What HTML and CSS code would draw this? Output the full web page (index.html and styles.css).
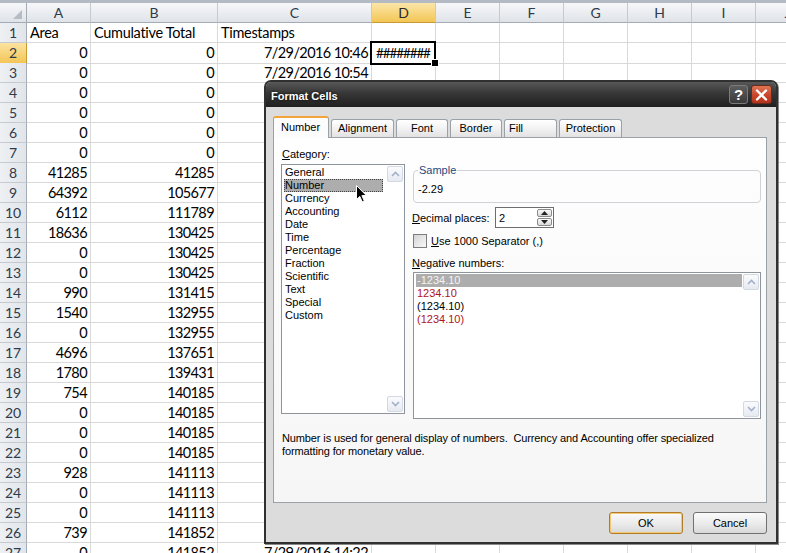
FILE: index.html
```html
<!DOCTYPE html>
<html>
<head>
<meta charset="utf-8">
<title>Format Cells</title>
<link rel="stylesheet" href="styles.css">
</head>
<body>
<div class="sheet">
  <div class="row head">
    <div class="corner"><span class="tri"></span></div>
    <div>A</div><div>B</div><div>C</div><div class="selcol">D</div><div>E</div><div>F</div><div>G</div><div>H</div><div>I</div><div>J</div>
  </div>
  <div class="row"><div class="rh">1</div><div class="t">Area</div><div class="t">Cumulative Total</div><div class="t">Timestamps</div><div></div><div></div><div></div><div></div><div></div><div></div><div></div></div>
  <div class="row"><div class="rh selrow">2</div><div class="n">0</div><div class="n">0</div><div class="n">7/29/2016 10:46</div><div class="curcell">########<span class="handle"></span></div><div></div><div></div><div></div><div></div><div></div><div></div></div>
  <div class="row"><div class="rh">3</div><div class="n">0</div><div class="n">0</div><div class="n">7/29/2016 10:54</div><div></div><div></div><div></div><div></div><div></div><div></div><div></div></div>
  <div class="row"><div class="rh">4</div><div class="n">0</div><div class="n">0</div><div></div><div></div><div></div><div></div><div></div><div></div><div></div><div></div></div>
  <div class="row"><div class="rh">5</div><div class="n">0</div><div class="n">0</div><div></div><div></div><div></div><div></div><div></div><div></div><div></div><div></div></div>
  <div class="row"><div class="rh">6</div><div class="n">0</div><div class="n">0</div><div></div><div></div><div></div><div></div><div></div><div></div><div></div><div></div></div>
  <div class="row"><div class="rh">7</div><div class="n">0</div><div class="n">0</div><div></div><div></div><div></div><div></div><div></div><div></div><div></div><div></div></div>
  <div class="row"><div class="rh">8</div><div class="n">41285</div><div class="n">41285</div><div></div><div></div><div></div><div></div><div></div><div></div><div></div><div></div></div>
  <div class="row"><div class="rh">9</div><div class="n">64392</div><div class="n">105677</div><div></div><div></div><div></div><div></div><div></div><div></div><div></div><div></div></div>
  <div class="row"><div class="rh">10</div><div class="n">6112</div><div class="n">111789</div><div></div><div></div><div></div><div></div><div></div><div></div><div></div><div></div></div>
  <div class="row"><div class="rh">11</div><div class="n">18636</div><div class="n">130425</div><div></div><div></div><div></div><div></div><div></div><div></div><div></div><div></div></div>
  <div class="row"><div class="rh">12</div><div class="n">0</div><div class="n">130425</div><div></div><div></div><div></div><div></div><div></div><div></div><div></div><div></div></div>
  <div class="row"><div class="rh">13</div><div class="n">0</div><div class="n">130425</div><div></div><div></div><div></div><div></div><div></div><div></div><div></div><div></div></div>
  <div class="row"><div class="rh">14</div><div class="n">990</div><div class="n">131415</div><div></div><div></div><div></div><div></div><div></div><div></div><div></div><div></div></div>
  <div class="row"><div class="rh">15</div><div class="n">1540</div><div class="n">132955</div><div></div><div></div><div></div><div></div><div></div><div></div><div></div><div></div></div>
  <div class="row"><div class="rh">16</div><div class="n">0</div><div class="n">132955</div><div></div><div></div><div></div><div></div><div></div><div></div><div></div><div></div></div>
  <div class="row"><div class="rh">17</div><div class="n">4696</div><div class="n">137651</div><div></div><div></div><div></div><div></div><div></div><div></div><div></div><div></div></div>
  <div class="row"><div class="rh">18</div><div class="n">1780</div><div class="n">139431</div><div></div><div></div><div></div><div></div><div></div><div></div><div></div><div></div></div>
  <div class="row"><div class="rh">19</div><div class="n">754</div><div class="n">140185</div><div></div><div></div><div></div><div></div><div></div><div></div><div></div><div></div></div>
  <div class="row"><div class="rh">20</div><div class="n">0</div><div class="n">140185</div><div></div><div></div><div></div><div></div><div></div><div></div><div></div><div></div></div>
  <div class="row"><div class="rh">21</div><div class="n">0</div><div class="n">140185</div><div></div><div></div><div></div><div></div><div></div><div></div><div></div><div></div></div>
  <div class="row"><div class="rh">22</div><div class="n">0</div><div class="n">140185</div><div></div><div></div><div></div><div></div><div></div><div></div><div></div><div></div></div>
  <div class="row"><div class="rh">23</div><div class="n">928</div><div class="n">141113</div><div></div><div></div><div></div><div></div><div></div><div></div><div></div><div></div></div>
  <div class="row"><div class="rh">24</div><div class="n">0</div><div class="n">141113</div><div></div><div></div><div></div><div></div><div></div><div></div><div></div><div></div></div>
  <div class="row"><div class="rh">25</div><div class="n">0</div><div class="n">141113</div><div></div><div></div><div></div><div></div><div></div><div></div><div></div><div></div></div>
  <div class="row"><div class="rh">26</div><div class="n">739</div><div class="n">141852</div><div></div><div></div><div></div><div></div><div></div><div></div><div></div><div></div></div>
  <div class="row"><div class="rh">27</div><div class="n">0</div><div class="n">141852</div><div class="n">7/29/2016 14:22</div><div></div><div></div><div></div><div></div><div></div><div></div><div></div></div>
</div>

<div class="dialog">
  <div class="titlebar">
    <span class="title">Format Cells</span>
    <span class="tb-btns">
      <span class="help">?</span>
      <span class="close"><svg width="13" height="12" viewBox="0 0 13 12"><path d="M2 1.5 L11 10.5 M11 1.5 L2 10.5" stroke="#fff" stroke-width="2.4" stroke-linecap="round"/></svg></span>
    </span>
  </div>
  <div class="dbody">
    <div class="tabs">
      <span class="tab tab-on w-number">Number</span>
      <span class="tab w-align">Alignment</span>
      <span class="tab w-font">Font</span>
      <span class="tab w-border">Border</span>
      <span class="tab w-fill">Fill</span>
      <span class="tab w-prot">Protection</span>
    </div>
    <div class="panel">
      <div class="lbl"><u>C</u>ategory:</div>
      <div class="cols">
        <div class="listbox cat">
          <div class="items">
            <div>General</div>
            <div class="selitem">Number</div>
            <div>Currency</div>
            <div>Accounting</div>
            <div>Date</div>
            <div>Time</div>
            <div>Percentage</div>
            <div>Fraction</div>
            <div>Scientific</div>
            <div>Text</div>
            <div>Special</div>
            <div>Custom</div>
          </div>
          <div class="scroll">
            <span class="sb"><svg width="9" height="6" viewBox="0 0 9 6"><path d="M1 5 L4.5 1.5 L8 5" fill="none" stroke="#a3b1c8" stroke-width="1.6"/></svg></span>
            <span class="sb"><svg width="9" height="6" viewBox="0 0 9 6"><path d="M1 1 L4.5 4.5 L8 1" fill="none" stroke="#a3b1c8" stroke-width="1.6"/></svg></span>
          </div>
        </div>
        <div class="right">
          <fieldset class="sample">
            <legend>Sample</legend>
            <div class="sval">-2.29</div>
          </fieldset>
          <div class="dec">
            <span class="declbl"><u>D</u>ecimal places:</span>
            <div class="spin">
              <span class="spinval">2</span>
              <span class="arrows">
                <span class="arr"><svg width="7" height="4" viewBox="0 0 7 4"><path d="M0 4 L3.5 0 L7 4 Z" fill="#222"/></svg></span>
                <span class="arr"><svg width="7" height="4" viewBox="0 0 7 4"><path d="M0 0 L3.5 4 L7 0 Z" fill="#222"/></svg></span>
              </span>
            </div>
          </div>
          <div class="chk">
            <span class="box"></span>
            <span><u>U</u>se 1000 Separator (,)</span>
          </div>
          <div class="lbl neglbl"><u>N</u>egative numbers:</div>
          <div class="listbox neg">
            <div class="items">
              <div class="selneg">-1234.10</div>
              <div class="red">1234.10</div>
              <div>(1234.10)</div>
              <div class="red">(1234.10)</div>
            </div>
            <div class="scroll">
              <span class="sb"><svg width="9" height="6" viewBox="0 0 9 6"><path d="M1 5 L4.5 1.5 L8 5" fill="none" stroke="#a3b1c8" stroke-width="1.6"/></svg></span>
              <span class="sb"><svg width="9" height="6" viewBox="0 0 9 6"><path d="M1 1 L4.5 4.5 L8 1" fill="none" stroke="#a3b1c8" stroke-width="1.6"/></svg></span>
            </div>
          </div>
        </div>
      </div>
      <p class="desc">Number is used for general display of numbers.&nbsp; Currency and Accounting offer specialized<br>formatting for monetary value.</p>
    </div>
    <div class="buttons">
      <span class="btn ok">OK</span>
      <span class="btn">Cancel</span>
    </div>
  </div>
</div>

<svg class="cursor" width="12" height="18" viewBox="0 0 12 18"><path d="M0.5 0.5 L0.5 14.5 L3.8 11.4 L6.2 16.8 L8.3 15.9 L5.9 10.6 L10.4 10.6 Z" fill="#000" stroke="#fff" stroke-width="1"/></svg>
</body>
</html>
```

FILE: styles.css
```css
html, body {
  margin: 0;
  padding: 0;
}
body {
  width: 786px;
  height: 553px;
  overflow: hidden;
  position: relative;
  background: #fff;
  font-family: Lato, "Liberation Sans", sans-serif;
}

/* ---------- spreadsheet ---------- */
.sheet {
  border-top: 3px solid #b4bac3;
  width: 786px;
  overflow: hidden;
}
.row {
  display: grid;
  grid-template-columns: 27px 64px 127px 154px repeat(7, 64px);
  height: 20px;
}
.row > div {
  box-sizing: border-box;
  border-right: 1px solid #d9d9d9;
  border-bottom: 1px solid #d9d9d9;
  font-size: 14.5px;
  letter-spacing: -0.3px;
  line-height: 20px;
  color: #000;
  white-space: nowrap;
  overflow: hidden;
  padding: 0 3px;
}
.row > .t { text-align: left; }
.row > .n {
  text-align: right;
  font-size: 14.5px;
  letter-spacing: -0.6px;
  padding-right: 3px;
}

.head > div {
  background: linear-gradient(#f6f7f9, #dfe3e8);
  border-right: 1px solid #c5cad1;
  border-bottom: 1px solid #a3abb6;
  text-align: center;
  font-size: 14px;
  letter-spacing: 0;
  color: #2f3b4b;
}
.head > .corner {
  position: relative;
  border-right: 1px solid #a3abb6;
}
.tri {
  position: absolute;
  right: 4px;
  bottom: 3px;
  width: 0;
  height: 0;
  border-left: 9px solid transparent;
  border-bottom: 9px solid #b5bcc6;
}
.head > .selcol {
  background: linear-gradient(#fbe6a9, #f3c655);
  border-bottom: 1px solid #c79b32;
  color: #2a2a2a;
}
.row > .rh {
  background: linear-gradient(90deg, #eef0f3, #e1e5ea);
  border-right: 1px solid #a3abb6;
  border-bottom: 1px solid #c5cad1;
  text-align: center;
  font-size: 14px;
  letter-spacing: 0;
  color: #2f3b4b;
  padding: 0;
}
.row > .selrow {
  background: linear-gradient(#fbe3a0, #f3c656);
  border-right: 1px solid #c79b32;
}
.row > .curcell {
  position: relative;
  overflow: visible;
  text-align: left;
  padding: 0 0 0 4px;
  letter-spacing: -1.1px;
  font-size: 13.5px;
}
.curcell::after {
  content: "";
  position: absolute;
  left: -2px;
  top: -2px;
  right: -1px;
  bottom: -2px;
  border: 2px solid #000;
}
.handle {
  position: absolute;
  right: -4px;
  bottom: -4px;
  width: 6px;
  height: 6px;
  background: #000;
  border: 1px solid #fff;
  z-index: 2;
}

/* ---------- dialog ---------- */
.dialog {
  position: absolute;
  left: 264px;
  top: 80px;
  width: 514px;
  height: 464px;
  box-sizing: border-box;
  border: 2px solid #303030;
  border-radius: 7px 7px 0 0;
  background: #dcdcdc;
  display: flex;
  flex-direction: column;
  z-index: 10;
  font-family: "Liberation Sans", Arial, sans-serif;
  font-size: 11px;
  color: #000;
  box-shadow: 1px 1px 0 #8a8a8a;
}
.titlebar {
  height: 25px;
  flex: none;
  display: flex;
  justify-content: space-between;
  align-items: flex-start;
  padding: 0 4px 0 5px;
  background: linear-gradient(#575757, #373737 45%, #202020);
  border-radius: 5px 5px 0 0;
}
.title {
  color: #fff;
  font-weight: bold;
  font-size: 11px;
  line-height: 25px;
  padding-top: 2px;
  text-shadow: 0 0 3px #000;
}
.tb-btns {
  display: flex;
  gap: 3px;
  padding-top: 3px;
}
.help {
  width: 19px;
  height: 19px;
  box-sizing: border-box;
  border: 1px solid #7b7b7b;
  border-radius: 3px;
  background: linear-gradient(#5e5e5e, #3a3a3a);
  color: #fff;
  font-weight: bold;
  font-size: 15px;
  line-height: 17px;
  text-align: center;
}
.close {
  width: 21px;
  height: 19px;
  box-sizing: border-box;
  border: 1px solid #6b2a1c;
  border-radius: 3px;
  background: linear-gradient(#e07655, #c8452a 55%, #b3341b);
  display: flex;
  align-items: center;
  justify-content: center;
}

.dbody {
  flex: 1;
  display: flex;
  flex-direction: column;
  padding: 9px 9px 0 7px;
}
.tabs {
  display: flex;
  align-items: flex-end;
  height: 21px;
  position: relative;
  z-index: 2;
}
.tab {
  box-sizing: border-box;
  height: 18px;
  margin-left: 2px;
  border: 1px solid #9aa2a8;
  border-bottom: none;
  border-radius: 3px 3px 0 0;
  background: linear-gradient(#ffffff, #f2f2f2 50%, #e2e2e2);
  text-align: center;
  line-height: 17px;
}
.tab.tab-on {
  margin-left: 0;
  height: 22px;
  margin-bottom: -1px;
  background: #fcfcfc;
  border-top: 2px solid #f2a43a;
  line-height: 19px;
  text-align: left;
  padding-left: 7px;
}
.w-number { width: 56px; }
.w-align { width: 63px; }
.w-font { width: 52px; }
.w-border { width: 52px; }
.w-fill { width: 53px; text-align: left; padding-left: 4px; }
.w-prot { width: 63px; }

.panel {
  box-sizing: border-box;
  height: 366px;
  border: 1px solid #9aa2a8;
  background: linear-gradient(#fefefe, #f6f6f6);
  padding: 10px 0 0 8px;
}
.lbl {
  line-height: 13px;
  height: 13px;
  margin-bottom: 3px;
}
.cols {
  display: flex;
  align-items: flex-start;
}
.listbox {
  box-sizing: border-box;
  border: 1px solid #8e949c;
  background: #fff;
  display: flex;
}
.listbox.cat {
  width: 124px;
  height: 250px;
  margin-left: -1px;
}
.items {
  flex: 1;
  padding: 1px 1px 0 2px;
}
.items > div {
  line-height: 13px;
  height: 13px;
  padding-left: 1px;
  white-space: nowrap;
}
.items > .selitem {
  background: #adadad;
  outline: 1px dotted #444;
  outline-offset: -1px;
  width: 99px;
  box-sizing: border-box;
}
.scroll {
  width: 17px;
  flex: none;
  display: flex;
  flex-direction: column;
  justify-content: space-between;
  padding: 1px 1px 1px 0;
  box-sizing: border-box;
}
.sb {
  box-sizing: border-box;
  height: 16px;
  border: 1px solid #d3d9e3;
  border-radius: 2px;
  background: linear-gradient(#fbfbfd, #e6eaf1);
  display: flex;
  align-items: center;
  justify-content: center;
}

.right {
  margin-left: 7px;
  width: 349px;
}
.sample {
  margin: 0 0 0 1px;
  padding: 0 5px 5px 4px;
  height: 39px;
  box-sizing: border-box;
  border: 1px solid #cfd2d6;
  border-radius: 4px;
}
.sample legend {
  padding: 0 1px;
  margin-left: 0;
  color: #1c4a80;
  line-height: 13px;
}
.sval {
  line-height: 13px;
  margin-top: 6px;
}
.dec {
  display: flex;
  align-items: center;
  margin-top: 4px;
  height: 21px;
}
.declbl {
  width: 83px;
}
.spin {
  box-sizing: border-box;
  width: 59px;
  height: 21px;
  border: 1px solid #6d6d6d;
  background: #fff;
  display: flex;
  justify-content: space-between;
  align-items: center;
  padding: 0 1px 0 3px;
}
.arrows {
  display: flex;
  flex-direction: column;
  gap: 1px;
}
.arr {
  box-sizing: border-box;
  width: 15px;
  height: 8px;
  border: 1px solid #8b8b8b;
  border-radius: 2px;
  background: linear-gradient(#fafafa, #d8d8d8);
  display: flex;
  align-items: center;
  justify-content: center;
}
.chk {
  display: flex;
  align-items: center;
  gap: 4px;
  margin-top: 6px;
  margin-left: 1px;
  height: 13px;
}
.box {
  box-sizing: border-box;
  width: 14px;
  height: 14px;
  border: 1px solid #7d7d7d;
  background: linear-gradient(135deg, #d4d4d4, #f8f8f8);
}
.neglbl {
  margin-top: 10px;
  margin-bottom: 2px;
}
.listbox.neg {
  width: 348px;
  height: 147px;
  margin-left: 1px;
}
.items > .selneg {
  background: #adadad;
  color: #f4f4f4;
}
.items > .red {
  color: #b0141c;
}
.desc {
  margin: 13px 0 0 0;
  line-height: 13px;
  letter-spacing: -0.12px;
}
.buttons {
  display: flex;
  justify-content: flex-end;
  gap: 10px;
  margin-top: 9px;
}
.btn {
  box-sizing: border-box;
  width: 74px;
  height: 22px;
  border: 1px solid #707070;
  border-radius: 3px;
  background: linear-gradient(#fbfbfb, #ececec 50%, #d8d8d8);
  text-align: center;
  line-height: 20px;
}
.btn.ok {
  border: 1px solid #b07b2a;
  box-shadow: inset 0 0 0 1px #f3c86e;
}

.cursor {
  position: absolute;
  left: 356px;
  top: 185px;
  z-index: 20;
}
```
